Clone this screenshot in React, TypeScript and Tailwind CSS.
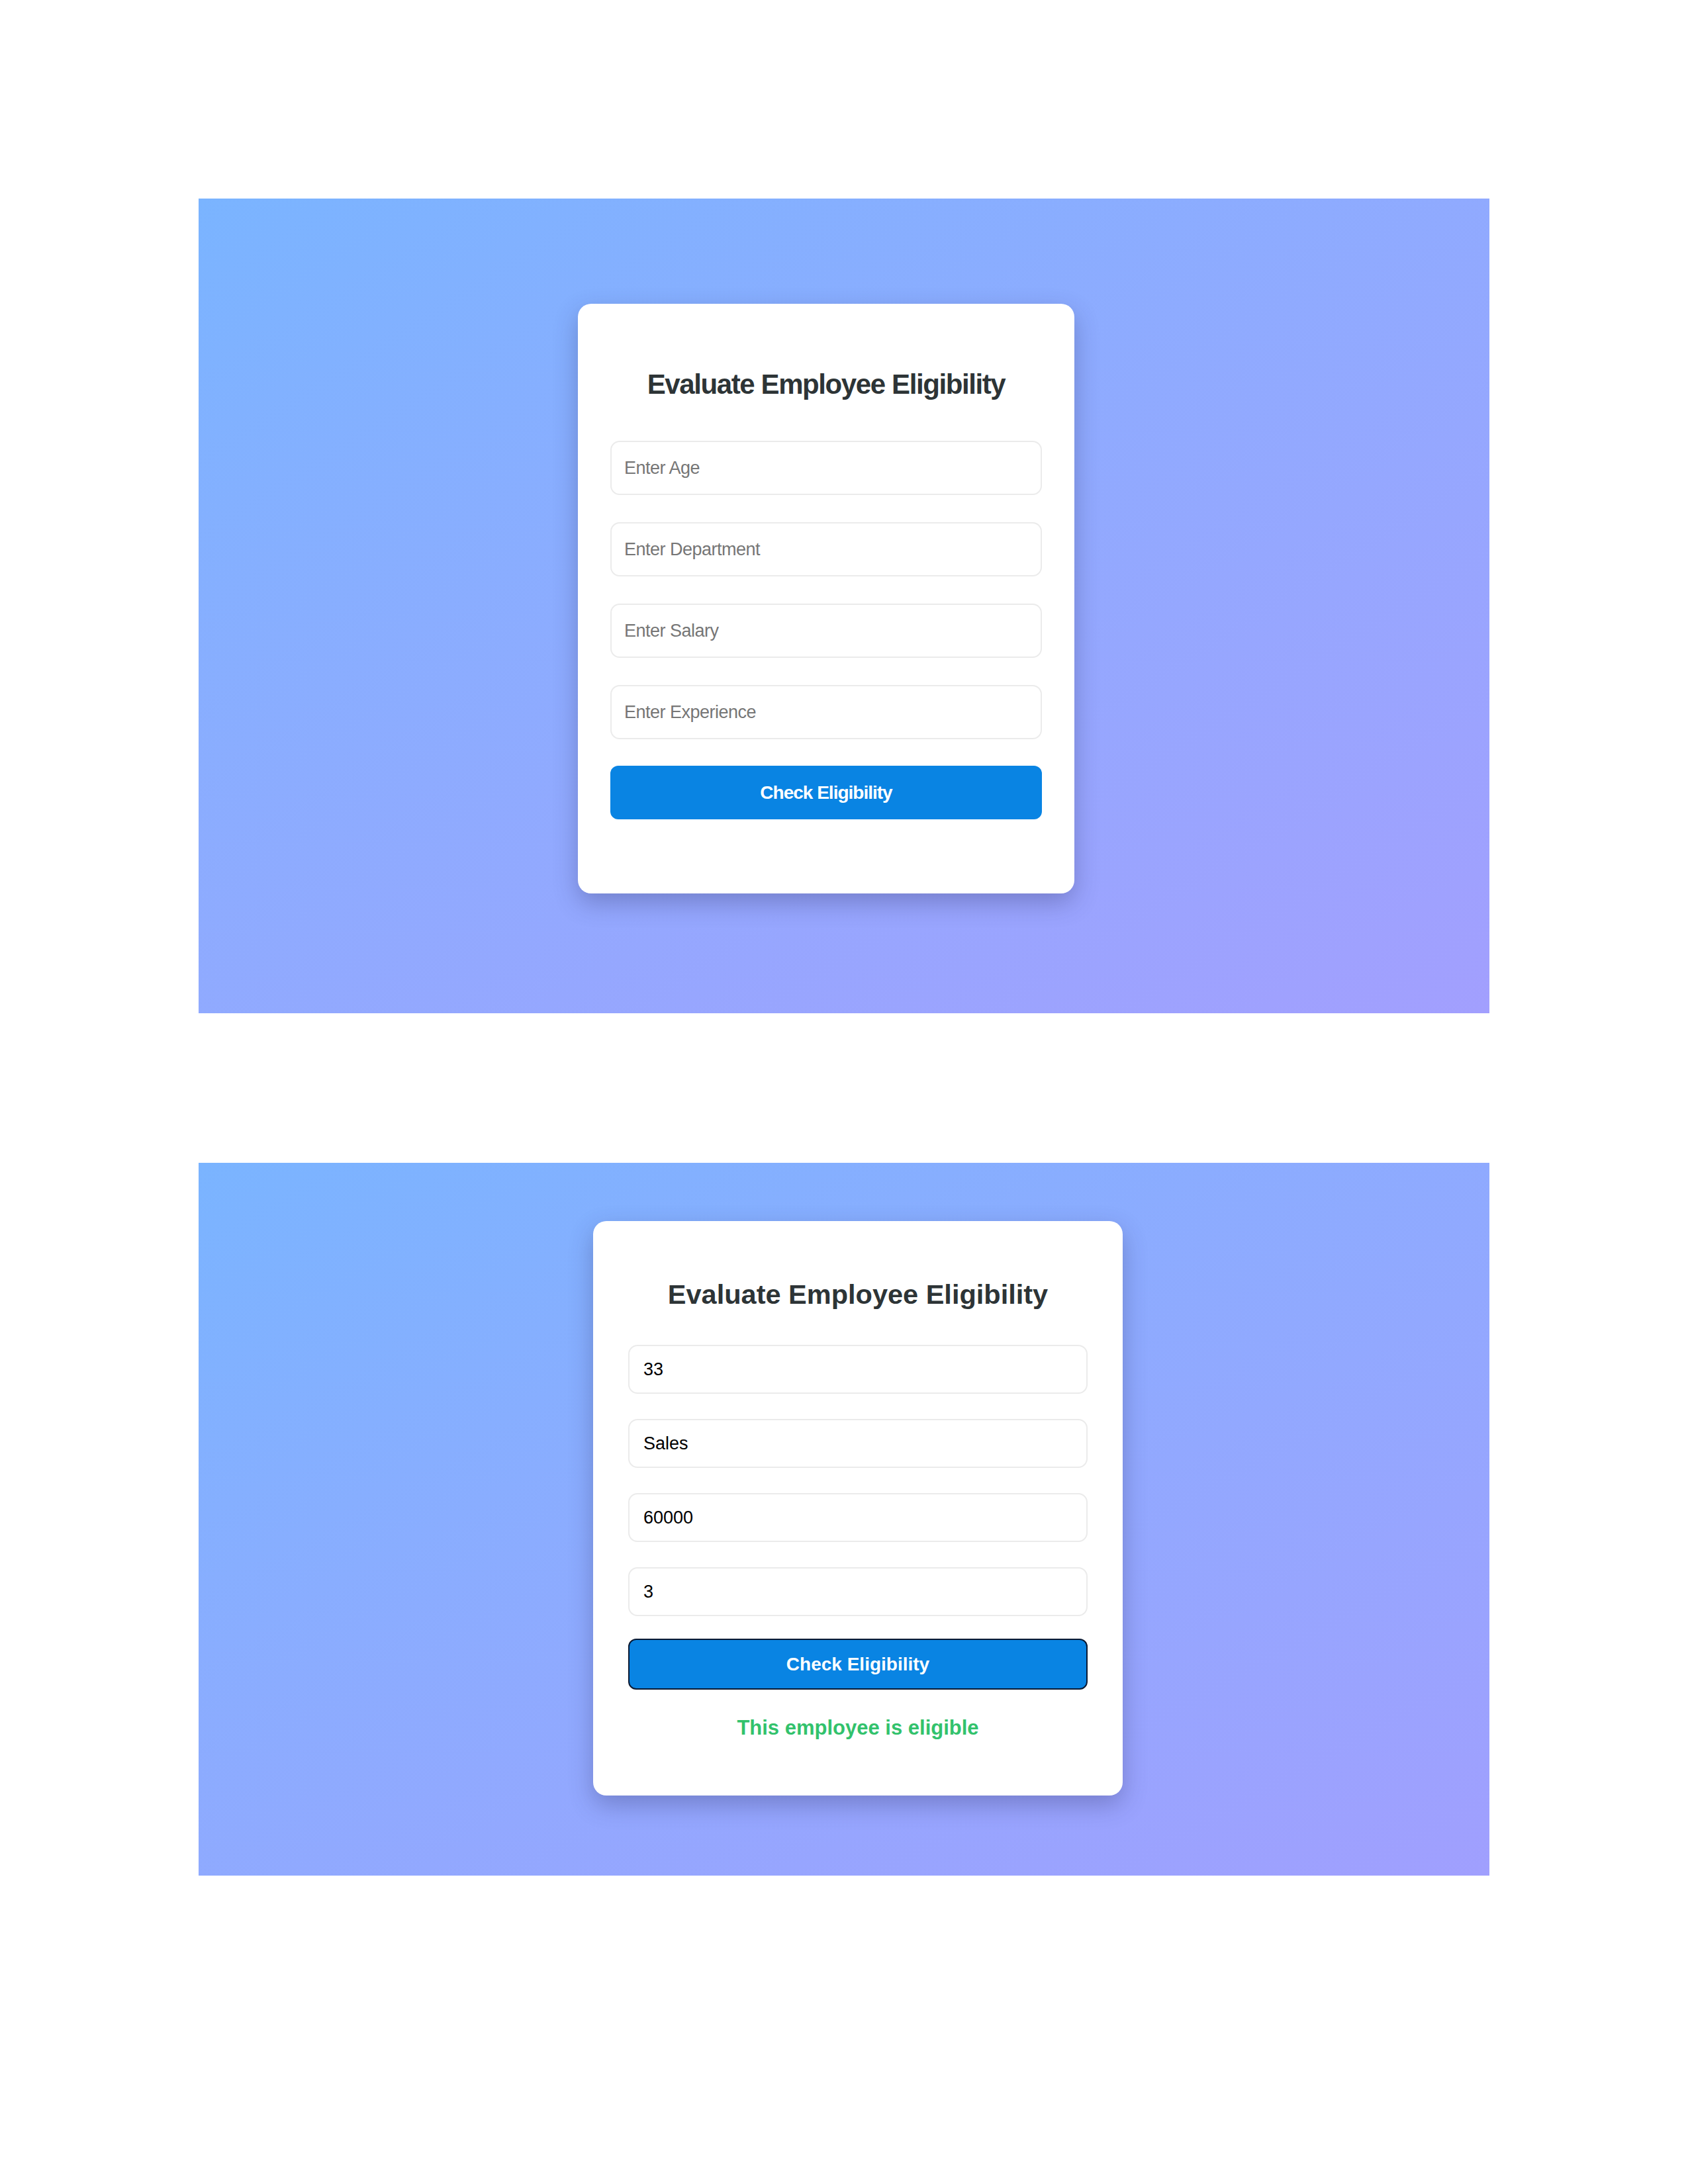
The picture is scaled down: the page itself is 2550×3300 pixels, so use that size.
const FIELDS = ['Age', 'Department', 'Salary', 'Experience']
const VALUES = ['33', 'Sales', '60000', '3']

function EmptyForm() {
  return (
    <div className="w-[750px] rounded-[20px] bg-white px-[49px] pt-[98px] pb-[112px] shadow-[0_14px_36px_rgba(40,40,90,0.3)]">
      <h2 className="text-center text-[42px] leading-[48px] font-bold tracking-[-1.4px] text-[#2d3436]">
        Evaluate Employee Eligibility
      </h2>
      <div className="mt-[61px] flex flex-col gap-[41px]">
        {FIELDS.map((f) => (
          <input
            key={f}
            placeholder={`Enter ${f}`}
            className="h-[82px] w-full rounded-[14px] border-2 border-[#ebebeb] bg-white px-[19px] text-[27px] tracking-[-0.5px] text-black outline-none placeholder:text-[#767676]"
          />
        ))}
      </div>
      <button className="mt-[40px] h-[81px] w-full rounded-[12px] bg-[#0984e3] text-[28px] font-bold tracking-[-1px] text-white">
        Check Eligibility
      </button>
    </div>
  )
}

function FilledForm() {
  return (
    <div className="w-[800px] rounded-[20px] bg-white px-[53px] pt-[87px] pb-[84px] shadow-[0_14px_36px_rgba(40,40,90,0.3)]">
      <h2 className="text-center text-[41.5px] leading-[48px] font-bold text-[#2d3436]">
        Evaluate Employee Eligibility
      </h2>
      <div className="mt-[52px] flex flex-col gap-[38px]">
        {VALUES.map((v, i) => (
          <input
            key={FIELDS[i]}
            readOnly
            defaultValue={v}
            className="h-[74px] w-full rounded-[14px] border-2 border-[#ebebeb] bg-white px-[21px] text-[27px] text-black outline-none"
          />
        ))}
      </div>
      <button className="mt-[34px] h-[77px] w-full rounded-[12px] border-2 border-[#0b1a33] bg-[#0984e3] text-[28px] font-bold text-white">
        Check Eligibility
      </button>
      <p className="mt-[40px] text-center text-[31px] leading-[36px] font-bold text-[#32c26c]">
        This employee is eligible
      </p>
    </div>
  )
}

export default function App() {
  return (
    <div className="min-h-[3300px] bg-white px-[300px] pt-[300px] font-['Liberation_Sans',Arial,sans-serif]">
      <div className="flex h-[1231px] items-start bg-linear-to-br from-[#7ab4ff] to-[#a29ffe] pt-[159px] pl-[573px]">
        <EmptyForm />
      </div>
      <div className="mt-[226px] flex h-[1077px] items-start bg-linear-to-br from-[#7ab4ff] to-[#a09ffe] pt-[88px] pl-[596px]">
        <FilledForm />
      </div>
    </div>
  )
}
